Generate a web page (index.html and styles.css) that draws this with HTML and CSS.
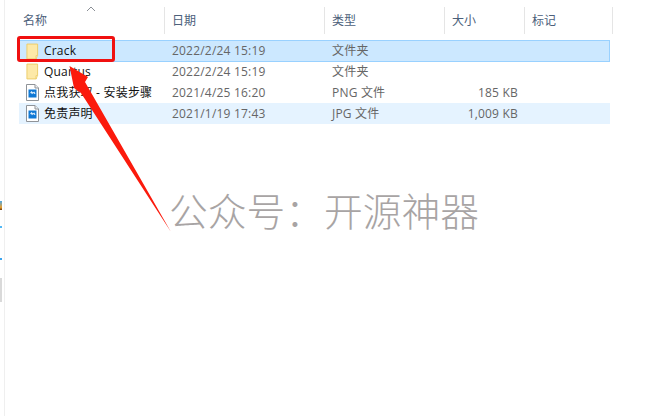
FILE: index.html
```html
<!DOCTYPE html>
<html lang="zh-CN">
<head>
  <meta charset="UTF-8" />
  <meta name="viewport" content="width=device-width, initial-scale=1" />
  <title>文件夹</title>
  <link rel="stylesheet" href="styles.css">
</head>
<body>
  <svg width="0" height="0" class="defs">
    <symbol id="folder" viewBox="0 0 14 17">
      <path d="M1 .5h11.500v12.500h-1.500v3.500H1z" fill="#fde9a8" stroke="#eccb66"/>
      <path d="M11 13h1.500l-1.500 3.500z" fill="#fff6d0" stroke="#eccb66" stroke-width=".6"/>
    </symbol>
    <symbol id="image" viewBox="0 0 13 17">
      <path d="M.5.500h8.500l3.500 3.500v12.500H.5z" fill="#fff" stroke="#8f9398"/>
      <path d="M9 .5v3.500h3.500" fill="#eef0f2" stroke="#8f9398"/>
      <rect x="2.500" y="5.500" width="8" height="8" fill="#0f78d4"/>
      <path d="M3.500 9.500l2-2.500 1.500 1.500 1.200-1 1.300 2-1 .5-1.200-1-1.300 1.300-1-1.500z" fill="#e4f2fd"/>
    </symbol>
  </svg>

  <div class="page">
    <div class="edge">
      <span class="speck speck-a"></span>
      <span class="speck speck-b"></span>
      <span class="speck speck-c"></span>
      <span class="speck speck-d"></span>
    </div>
    <div class="explorer">
      <div class="head">
        <div class="col first">名称</div>
        <div class="col">日期</div>
        <div class="col">类型</div>
        <div class="col">大小</div>
        <div class="col">标记</div>
      </div>
      <div class="row selected">
        <div class="name"><svg class="icon"><use href="#folder"/></svg>Crack</div>
        <div>2022/2/24 15:19</div>
        <div>文件夹</div>
        <div class="size"></div>
        <div></div>
      </div>
      <div class="row">
        <div class="name"><svg class="icon"><use href="#folder"/></svg>Quartus</div>
        <div>2022/2/24 15:19</div>
        <div>文件夹</div>
        <div class="size"></div>
        <div></div>
      </div>
      <div class="row">
        <div class="name"><svg class="icon"><use href="#image"/></svg>点我获取 - 安装步骤</div>
        <div>2021/4/25 16:20</div>
        <div>PNG 文件</div>
        <div class="size">185 KB</div>
        <div></div>
      </div>
      <div class="row hover">
        <div class="name"><svg class="icon"><use href="#image"/></svg>免责声明</div>
        <div>2021/1/19 17:43</div>
        <div>JPG 文件</div>
        <div class="size">1,009 KB</div>
        <div></div>
      </div>
      <div class="watermark">公众号：开源神器</div>
    </div>
  </div>

  <!-- annotation drawn over the list -->
  <svg class="sort" width="10" height="6" viewBox="0 0 10 6"><path d="M1 5l4-4 4 4" fill="none" stroke="#8a8f96"/></svg>
  <div class="callout"></div>
  <svg class="arrow" width="649" height="416" viewBox="0 0 649 416">
    <path d="M69.500 66L88 77 85 82 171 232 81 93 74 88z" fill="#fb1a0c"/>
  </svg>
</body>
</html>
```

FILE: styles.css
```css
html, body {
  margin: 0;
  height: 100%;
  overflow: hidden;
}
body {
  font-family: "Open Sans", "Noto Sans CJK SC", sans-serif;
  font-size: 12px;
  background: #fff;
  color: #666;
  position: relative;
}
.defs { position: absolute; }
.page {
  display: flex;
  height: 416px;
}
.edge {
  width: 4px;
  border-right: 1px solid #efefef;
  display: flex;
  flex-direction: column;
  align-items: flex-start;
}
.speck { display: block; width: 2px; }
.speck-a { height: 9px; margin-top: 201px; background: linear-gradient(#4aa8e8, #e8a030 70%, #6b3a10); }
.speck-b { height: 2px; margin-top: 16px; background: #52b8f5; }
.speck-c { height: 2px; margin-top: 30px; background: #3aa4ef; }
.speck-d { height: 24px; margin-top: 18px; background: #d9d9d9; }

.explorer {
  padding: 7px 0 0 14px;
  width: 594px;
}
.head, .row {
  display: grid;
  grid-template-columns: 146px 160px 120px 80px 1fr;
}
.head {
  height: 27px;
  margin-bottom: 6px;
  color: #4c607a;
}
.col {
  padding: 1px 0 0 7px;
  line-height: 25px;
  border-right: 1px solid #e5e5e5;
}
.col.first { padding-left: 4px; }
.row {
  width: 591px;
  height: 21px;
  line-height: 21px;
  letter-spacing: .2px;
  box-sizing: border-box;
}
.row > div { padding-left: 7px; white-space: nowrap; }
.row .name {
  display: flex;
  align-items: center;
  gap: 5px;
  color: #111;
}
.row .size {
  padding: 0 7px 0 0;
  text-align: right;
}
.icon { width: 13px; height: 17px; flex: none; }
.selected {
  height: 22px;
  margin-bottom: -1px;
  background: #cce8ff;
  border: 1px solid #99d1ff;
  line-height: 20px;
  grid-template-columns: 145px 160px 120px 80px 1fr;
}
.selected > .name { padding-left: 6px; }
.hover { background: #e5f3ff; }

.watermark {
  margin: 65px 0 0 150px;
  font-size: 38.75px;
  line-height: 44px;
  font-weight: 300;
  color: #a8a4a4;
  white-space: nowrap;
}

.sort {
  position: absolute;
  left: 86px;
  top: 6px;
}
.callout {
  position: absolute;
  left: 17px;
  top: 36px;
  width: 92px;
  height: 20px;
  border: 3px solid #f01010;
  border-radius: 3px;
}
.arrow {
  position: absolute;
  left: 0;
  top: 0;
}
```
